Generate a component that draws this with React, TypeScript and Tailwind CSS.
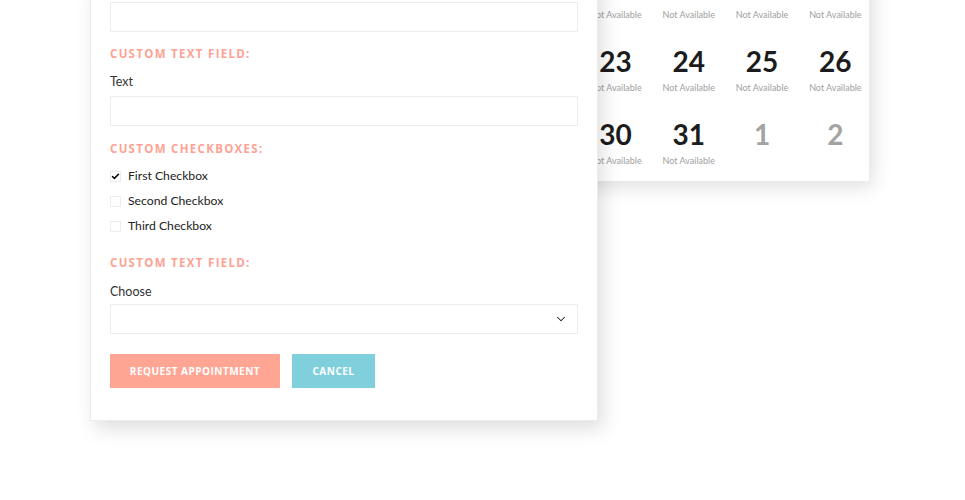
import { ChevronDown, Check } from "lucide-react";

const rows = [
  [
    { d: 13, na: true },
    { d: 14, na: true },
    { d: 15, na: true },
    { d: 16, na: true },
    { d: 17, na: true },
    { d: 18, na: true },
    { d: 19, na: true },
  ],
  [
    { d: 20, na: true },
    { d: 21, na: true },
    { d: 22, na: true },
    { d: 23, na: true },
    { d: 24, na: true },
    { d: 25, na: true },
    { d: 26, na: true },
  ],
  [
    { d: 27, na: true },
    { d: 28, na: true },
    { d: 29, na: true },
    { d: 30, na: true },
    { d: 31, na: true },
    { d: 1, na: false, muted: true },
    { d: 2, na: false, muted: true },
  ],
];

function Heading({ children, className = "" }: { children: React.ReactNode; className?: string }) {
  return (
    <h3
      className={`text-[11.5px] leading-[16px] font-bold uppercase tracking-[1.3px] text-[#ffa293] ${className}`}
      style={{ fontFamily: '"Open Sans", "DejaVu Sans", sans-serif' }}
    >
      {children}
    </h3>
  );
}

function CheckRow({ label, checked }: { label: string; checked?: boolean }) {
  return (
    <label className="flex items-center h-[18px] gap-[7px]">
      <span className="w-[11px] h-[11px] border border-[#ececec] bg-white flex items-center justify-center">
        {checked && <Check className="w-[9px] h-[9px] text-black" strokeWidth={4} />}
      </span>
      <span className="text-[12.2px] text-[#222]">{label}</span>
    </label>
  );
}

export default function App() {
  return (
    <div
      className="relative w-[965px] h-[500px] overflow-hidden bg-white"
      style={{ fontFamily: 'Lato, "Open Sans", sans-serif' }}
    >
      {/* Calendar card, partly under the form */}
      <div className="absolute left-[359px] top-[-52px] w-[510px] bg-white pt-[24px] pb-[14px] shadow-[4px_6px_18px_rgba(0,0,0,0.13)]">
        <div className="flex flex-col gap-[24px] mr-[-3px]">
          {rows.map((row, i) => (
            <div key={i} className="grid grid-cols-7">
              {row.map((c, j) => (
                <div key={j} className="flex flex-col items-center">
                  <span
                    className={`text-[28px] leading-[32px] font-bold ${
                      c.muted ? "text-[#a3a3a3]" : "text-[#1c1c1c]"
                    }`}
                  >
                    {c.d}
                  </span>
                  <span className="mt-[5px] h-[12px] text-[9px] leading-[12px] text-[#a0a0a0]">
                    {c.na ? "Not Available" : ""}
                  </span>
                </div>
              ))}
            </div>
          ))}
        </div>
      </div>

      {/* Form card */}
      <div className="relative z-10 ml-[90px] mt-[-20px] w-[508px] bg-white border border-[#ececec] px-[19px] pt-[21px] pb-[32px] shadow-[5px_8px_18px_rgba(0,0,0,0.13)]">
        <div className="h-[30px] border border-[#ececec]" />

        <Heading className="mt-[14px]">Custom Text Field:</Heading>
        <div className="mt-[11px] text-[12.5px] leading-[18px] text-[#333]">Text</div>
        <div className="mt-[5px] h-[30px] border border-[#ececec]" />

        <Heading className="mt-[15px]">Custom Checkboxes:</Heading>
        <div className="mt-[10px] flex flex-col gap-[7px]">
          <CheckRow label="First Checkbox" checked />
          <CheckRow label="Second Checkbox" />
          <CheckRow label="Third Checkbox" />
        </div>

        <Heading className="mt-[20px]">Custom Text Field:</Heading>
        <div className="mt-[12px] text-[12.5px] leading-[18px] text-[#333]">Choose</div>
        <div className="mt-[3px] h-[30px] border border-[#ececec] flex items-center justify-end pr-[9px]">
          <ChevronDown className="w-[14px] h-[14px] text-[#222]" strokeWidth={1.75} />
        </div>

        <div className="mt-[20px] flex gap-[12px]">
          <button
            className="h-[34px] w-[170px] bg-[#ffa594] text-white text-[10px] font-bold uppercase tracking-[0.5px]"
            style={{ fontFamily: '"Open Sans", sans-serif' }}
          >
            Request Appointment
          </button>
          <button
            className="h-[34px] w-[83px] bg-[#7fd0dc] text-white text-[10px] font-bold uppercase tracking-[0.5px]"
            style={{ fontFamily: '"Open Sans", sans-serif' }}
          >
            Cancel
          </button>
        </div>
      </div>
    </div>
  );
}
